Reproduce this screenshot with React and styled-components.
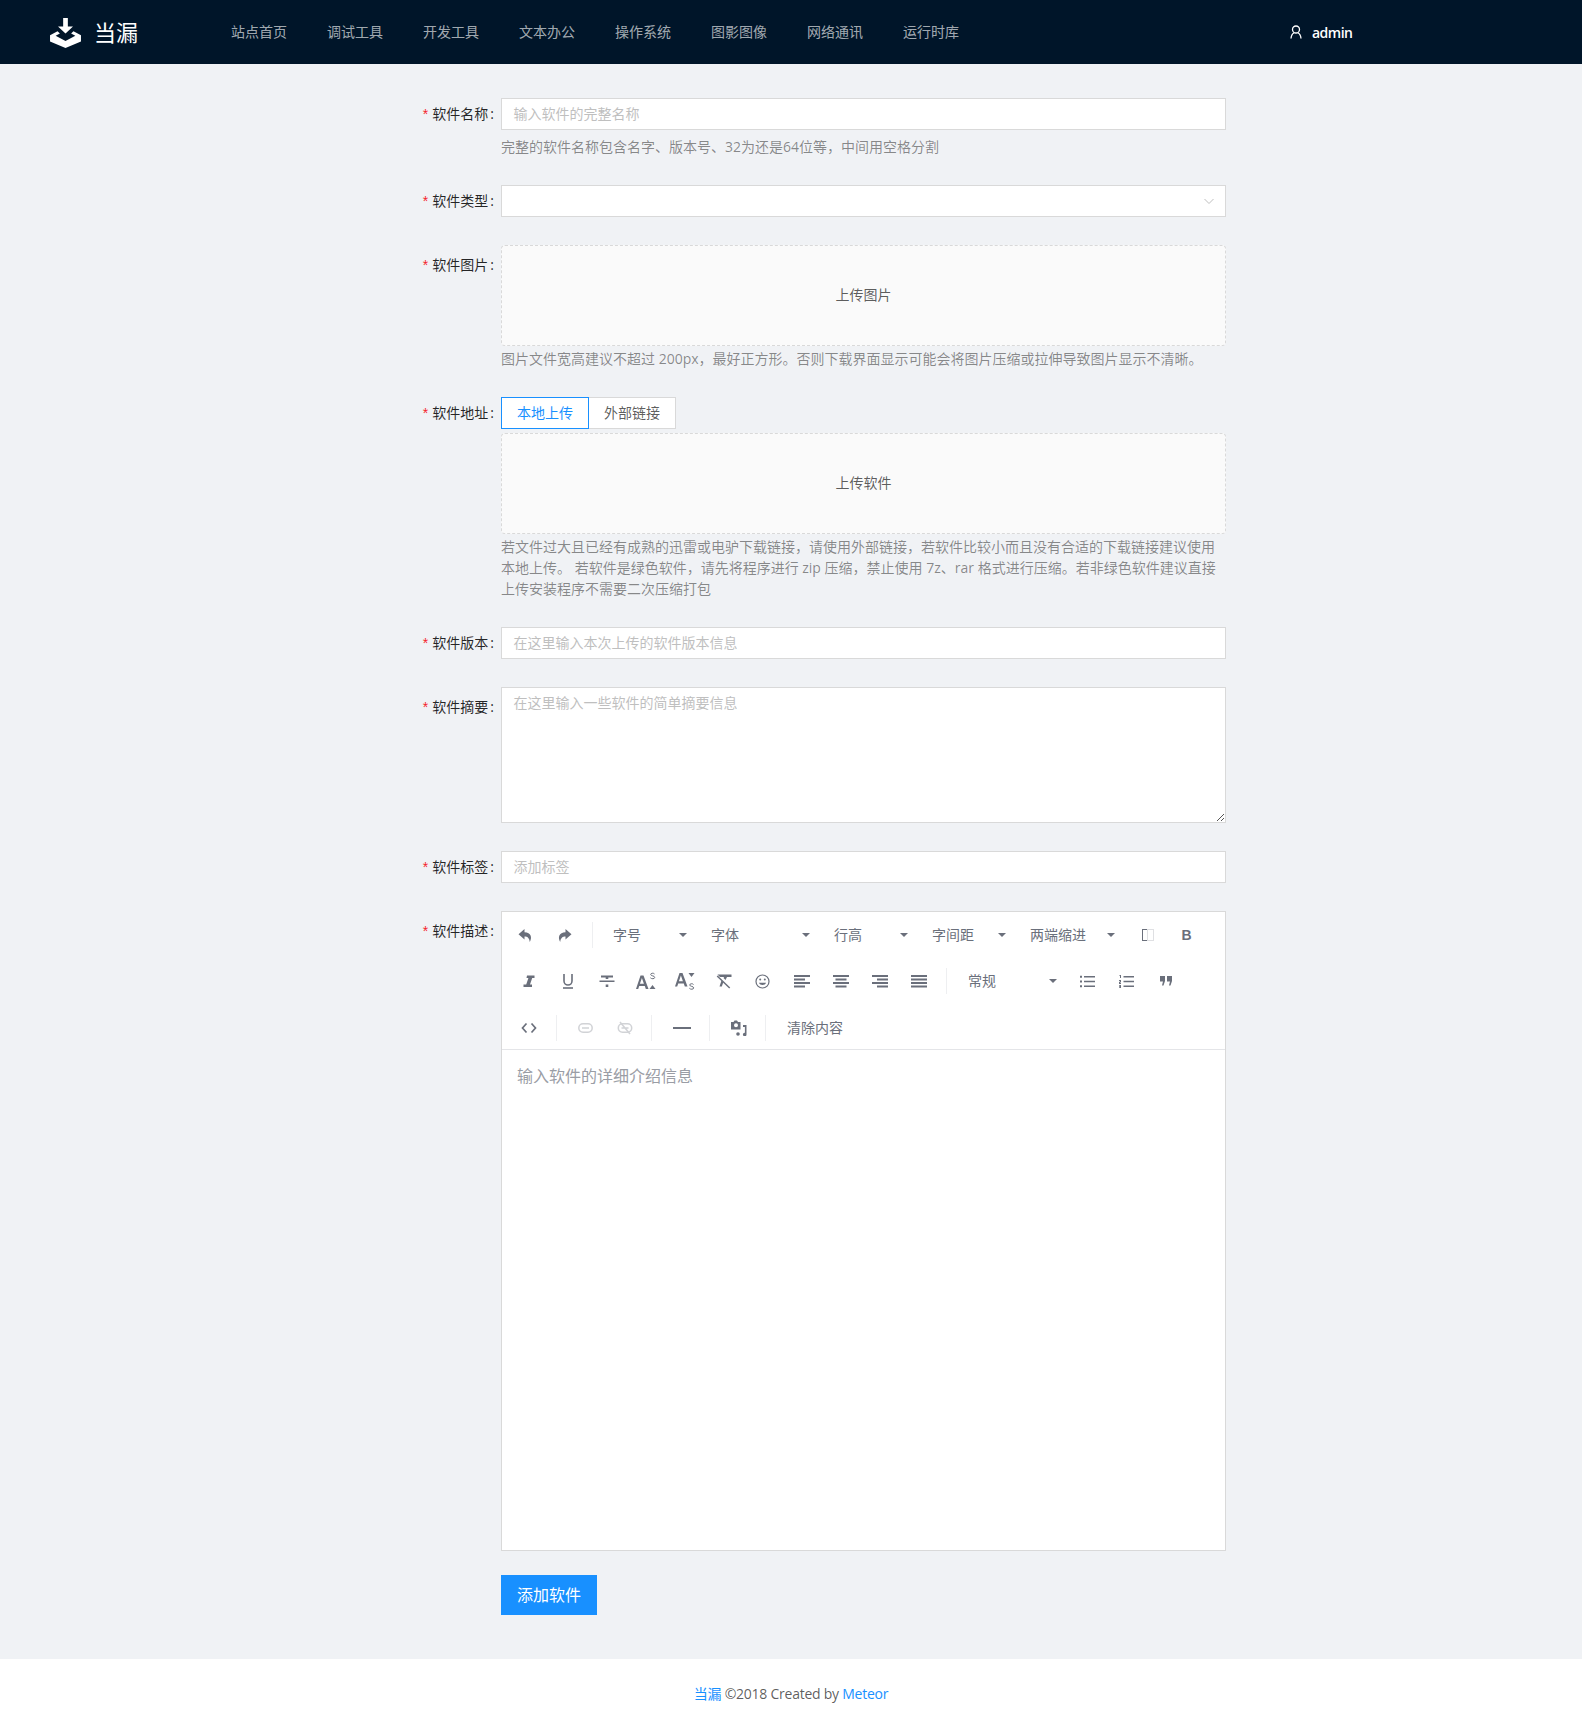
import React from 'react';
import styled, { createGlobalStyle } from 'styled-components';

const Global = createGlobalStyle`
  html, body { margin: 0; padding: 0; background: #f0f2f5; }
  body { font-family: "Open Sans", "Noto Sans CJK SC", sans-serif; font-size: 14px; color: rgba(0,0,0,.65); }
  * { box-sizing: border-box; }
`;

const Page = styled.div`display: flex; flex-direction: column; min-height: 1728px;`;
const Header = styled.header`height: 64px; background: #001529; display: flex; align-items: center;`;
const Logo = styled.div`display: flex; align-items: center; width: 231px; padding-left: 49px;`;
const LogoMark = styled.svg`margin-top: 2px;`;
const LogoTitle = styled.span`margin: 0 0 3px 12px; color: #fff; font-size: 22px; line-height: 32px; font-family: "Noto Sans CJK SC", sans-serif;`;
const Nav = styled.nav`display: flex; gap: 40px; width: 1059px;`;
const NavItem = styled.a`color: rgba(255,255,255,.65); font-size: 14px; line-height: 64px; width: 56px; white-space: nowrap;`;
const User = styled.div`display: flex; align-items: center; gap: 10px; color: #fff; font-size: 14px; font-weight: 600; letter-spacing: -.5px;`;

const Form = styled.main`flex: 1; padding-top: 34px; display: flex; flex-direction: column;`;
const Row = styled.div`display: grid; grid-template-columns: 501px 725px; margin-bottom: ${p => p.$mb ?? 26}px;`;
const Label = styled.label`text-align: right; line-height: ${p => p.$lh || 32}px; color: rgba(0,0,0,.85); white-space: nowrap;
  &::before { content: '*'; color: #f5222d; margin-right: 4px; font-family: SimSun, "Liberation Sans", sans-serif; }
  &::after { content: ':'; margin: 0 7px 0 2px; }
`;
const Control = styled.div`display: flex; flex-direction: column;`;
const Input = styled.div`height: 32px; border: 1px solid #d9d9d9; background: #fff; padding: 0 10px 0 11.5px; line-height: 30px; color: #bfbfbf; display: flex; justify-content: space-between; align-items: center;`;
const TextArea = styled.div`height: 136px; border: 1px solid #d9d9d9; background: #fff; padding: 4px 11.5px; line-height: 22px; color: #bfbfbf; position: relative;`;
const Grip = styled.svg`position: absolute; right: 0; bottom: 0;`;
const Help = styled.div`color: rgba(0,0,0,.45); line-height: 21px; margin-top: ${p => p.$mt ?? 6}px; min-height: 22px;`;
const Drop = styled.div`height: 101px; padding-bottom: 3px; border: 1px dashed #d9d9d9; border-radius: 4px; background: #fafafa; display: flex; align-items: center; justify-content: center; color: rgba(0,0,0,.65);`;
const Tabs = styled.div`display: flex; height: 32px; margin-bottom: 4px;`;
const Tab = styled.div`width: ${p => p.$w}px; line-height: 30px; text-align: center; background: #fff; border: 1px solid ${p => p.$active ? '#1890ff' : '#d9d9d9'}; ${p => !p.$active && 'border-left: 0;'} color: ${p => p.$active ? '#1890ff' : 'rgba(0,0,0,.65)'};`;

const Editor = styled.div`height: 640px; background: #fff; border: 1px solid #d9d9d9; display: flex; flex-direction: column;`;
const Toolbar = styled.div`height: 138px; flex: none; border-bottom: 1px solid #e4e5e8; display: flex; flex-direction: column;`;
const ToolRow = styled.div`display: flex; flex: none; height: ${p => p.$h ?? 46}px; margin-top: ${p => p.$top ?? 0}px; padding-left: ${p => p.$pad}px; align-items: center;`;
const ToolBtn = styled.div`width: 33px; height: 36px; margin: 0 3px; flex: none; display: flex; align-items: center; justify-content: center; color: #6a6f7b; opacity: ${p => p.$off ? .3 : 1};`;
const ToolSep = styled.div`width: 1px; height: 26px; margin: 0 ${p => p.$r ?? 7}px 0 ${p => p.$l ?? 7}px; background: #eeeff1; flex: none;`;
const ToolDrop = styled.div`width: ${p => p.$w}px; height: 36px; margin: 0 ${p => p.$mr ?? 3}px 0 3px; padding: 0 7px 2px 11px; flex: none; display: flex; align-items: center; justify-content: space-between; color: #6a6f7b; font-size: 14px;
  &::after { content: ''; margin-top: 2px; border: 4px solid transparent; border-top: 4px solid #6a6f7b; border-bottom: 0; }
`;
const ToolText = styled.div`height: 36px; margin: 0 3px 0 11px; padding: 0 10px; line-height: 36px; color: #6a6f7b; font-size: 14px;`;
const EditorBody = styled.div`flex: 1; padding: 14px 15px; font-size: 16px; line-height: 24px; color: #9a9da5;`;
const Submit = styled.button`width: 96px; height: 40px; background: #1890ff; color: #fff; border: 0; font: inherit; font-size: 16px; padding: 0 0 2px;`;

const Footer = styled.footer`height: 69px; background: #fff; text-align: center; line-height: 70px; color: rgba(0,0,0,.65); letter-spacing: -.25px;`;
const FLink = styled.a`color: #1890ff;`;

const LogoIcon = () => (
  <LogoMark width="33" height="30" viewBox="0 0 33 32" fill="#fff">
    <path d="M14 0h5v9h5.500L16.500 16.500 8.500 9H14z"/>
    <path d="M0 18.500 8 14l2.500 2.500-4.500 2.500 10.500 5.500L27 19l-4.500-2.500L25 14l8 4.500V25l-16.500 7L0 25z"/>
  </LogoMark>
);
const UserIcon = () => (
  <svg width="12" height="14" viewBox="0 0 12 14" fill="none" stroke="#fff" strokeWidth="1.3">
    <circle cx="6" cy="4.500" r="3.500"/><path d="M1 13.500c.3-3 1.700-5 3-5.500M11 13.500c-.3-3-1.700-5-3-5.500"/>
  </svg>
);
const Undo = () => <svg width="15" height="15" viewBox="0 0 15 15" fill="currentColor"><path d="M6.500 1 .5 6.300 6.500 11.500V8.400c3 0 4.700 1.200 5.300 5.600 2.600-4.800 1.300-9.300-5.300-9.700z"/></svg>;
const Redo = () => <svg width="15" height="15" viewBox="0 0 15 15" fill="currentColor"><path d="M8.500 1l6 5.300-6 5.200V8.400c-3 0-4.700 1.200-5.300 5.600C.6 9.200 1.900 4.700 8.500 4.300z"/></svg>;
const AlignLeft = () => <svg width="16" height="14" viewBox="0 0 16 14" fill="currentColor"><path d="M0 1h16v2H0zM0 4.500h11v2H0zM0 8h16v2H0zM0 11.500h11v2H0z"/></svg>;
const AlignCenter = () => <svg width="16" height="14" viewBox="0 0 16 14" fill="currentColor"><path d="M0 1h16v2H0zM2.500 4.500h11v2h-11zM0 8h16v2H0zM2.500 11.500h11v2h-11z"/></svg>;
const AlignRight = () => <svg width="16" height="14" viewBox="0 0 16 14" fill="currentColor"><path d="M0 1h16v2H0zM5 4.500h11v2H5zM0 8h16v2H0zM5 11.500h11v2H5z"/></svg>;
const AlignJust = () => <svg width="16" height="14" viewBox="0 0 16 14" fill="currentColor"><path d="M0 1h16v2H0zM0 4.500h16v2H0zM0 8h16v2H0zM0 11.500h16v2H0z"/></svg>;
const Italic = () => <svg width="14" height="14" viewBox="0 0 14 14" fill="currentColor"><path d="M5 1.500h7.500V4h-2.300L8 10.500h2V13H1.500v-2.500h2.700L6.400 4H4.500z"/></svg>;
const Under = () => <svg width="14" height="16" viewBox="0 0 14 16" fill="none" stroke="currentColor" strokeWidth="1.6"><path d="M3 1v7a4 4 0 0 0 8 0V1"/><path d="M2 15h10"/></svg>;
const Strike = () => <svg width="16" height="16" viewBox="0 0 16 16" fill="currentColor"><path d="M2 2.500h12v2H2zM.5 7.500h15V9H.5zM6.700 11.500h2.600v2.500H6.700zM6.700 4.500h2.600V6H6.700z"/></svg>;
const Sup = () => <svg width="20" height="18" viewBox="0 0 20 18" fill="currentColor">
  <path d="M4.500 3.500h3L12.500 17H9.800l-1-3H3.200l-1 3H0zm-.6 8.300h4L5.900 6z"/>
  <path d="M13.500 17h6l-3-4z"/>
  <path d="M18.500 2c-.8-1.200-3.800-1-3.800.5 0 1.700 4 1 4 2.900 0 1.700-3.300 1.700-4.300.4" fill="none" stroke="currentColor" strokeWidth="1"/>
</svg>;
const Sub = () => <svg width="20" height="20" viewBox="0 0 20 20" fill="currentColor">
  <path d="M4.500 2h3l5 13.500H9.800l-1-3H3.200l-1 3H0zm-.6 8.300h4L5.900 4.500z"/>
  <path d="M13.500 2h6l-3 4z"/>
  <path d="M18.500 13.500c-.8-1.200-3.800-1-3.800.5 0 1.700 4 1 4 2.900 0 1.700-3.300 1.700-4.300.4" fill="none" stroke="currentColor" strokeWidth="1"/>
</svg>;
const Clear = () => <svg width="16" height="16" viewBox="0 0 16 16" fill="currentColor">
  <path d="M1.500 1.500h14V4H11l-1.500 3-2-2L8.200 4H4z"/><path d="M5.500 7.500l1.800 1.800L5.800 13.500H3.500z"/><path d="M1.200 3l12.500 12" stroke="currentColor" strokeWidth="1.500"/>
</svg>;
const Emoji = () => <svg width="15" height="15" viewBox="0 0 15 15" fill="none" stroke="currentColor" strokeWidth="1.200"><circle cx="7.500" cy="7.500" r="6.500"/><path d="M4 8.800c.8 3 6.200 3 7 0z" fill="currentColor" stroke="none"/><circle cx="5.200" cy="5.500" r="1" fill="currentColor" stroke="none"/><circle cx="9.800" cy="5.500" r="1" fill="currentColor" stroke="none"/></svg>;
const UL = () => <svg width="15" height="13" viewBox="0 0 15 13" fill="currentColor"><path d="M4 1h11v1.500H4zM4 5.700h11v1.500H4zM4 10.500h11V12H4zM0 .7h2v2H0zM0 5.500h2v2H0zM0 10.200h2v2H0z"/></svg>;
const OL = () => <svg width="15" height="13" viewBox="0 0 15 13" fill="currentColor"><path d="M4.500 1h10.500v1.500H4.500zM4.500 5.700h10.500v1.500H4.500zM4.500 10.500h10.500V12H4.500zM.5 0h1.500v3H1V1H.5zM0 5h2v2.500H1V8h1v1H0V6.700h1V6H0zM0 10h2v3H0v-.8h1v-.3H.3v-.8H1v-.3H0z"/></svg>;
const Quote = () => <svg width="12" height="10" viewBox="0 0 12 10" fill="currentColor"><path d="M0 0h5v5L3.500 9.500H2L3 5.500H0zM7 0h5v5l-1.500 4.500H9L10 5.500H7z"/></svg>;
const Code = () => <svg width="16" height="12" viewBox="0 0 16 12" fill="none" stroke="currentColor" strokeWidth="1.700"><path d="M5.500 1.500 1.500 6l4 4.500M10.500 1.500l4 4.500-4 4.500"/></svg>;
const LinkI = () => <svg width="15" height="10" viewBox="0 0 15 10" fill="none" stroke="currentColor" strokeWidth="1.500"><rect x=".8" y=".8" width="13.400" height="8.400" rx="4.200"/><path d="M4 5h7" /></svg>;
const Unlink = () => <svg width="16" height="14" viewBox="0 0 16 14" fill="none" stroke="currentColor" strokeWidth="1.500"><rect x="1.300" y="2.800" width="13.400" height="8.400" rx="4.200"/><path d="M4.500 7h7M3 1l10 12"/></svg>;
const Hr = () => <svg width="18" height="3" viewBox="0 0 18 3" fill="currentColor"><rect width="18" height="2"/></svg>;
const Media = () => <svg width="16" height="16" viewBox="0 0 16 16" fill="currentColor">
  <path d="M0 2h2.500l1-1.500h2.500l1 1.500h2.500v7.500H0zM5 3.300a2 2 0 1 0 0 4 2 2 0 0 0 0-4z" fillRule="evenodd"/>
  <path d="M12 5h3.500v9.500a1.800 1.800 0 1 1-1.600-1.800V7H12z"/><circle cx="7" cy="14" r="1.800"/>
</svg>;
const Columns = () => <svg width="12" height="12" viewBox="0 0 12 12" fill="none"><rect x=".5" y=".5" width="5" height="11" stroke="#6a6f7b" strokeWidth="1"/><rect x="5.500" y=".5" width="6" height="11" stroke="#dfe0e3" strokeWidth="1"/></svg>;
const Bold = styled.span`font-weight: 800; font-size: 14px; font-family: "Liberation Sans", sans-serif;`;

const nav = ['站点首页','调试工具','开发工具','文本办公','操作系统','图影图像','网络通讯','运行时库'];

export default function App() {
  return (
    <Page>
      <Global />
      <Header>
        <Logo><LogoIcon /><LogoTitle>当漏</LogoTitle></Logo>
        <Nav>{nav.map(n => <NavItem key={n}>{n}</NavItem>)}</Nav>
        <User><UserIcon />admin</User>
      </Header>
      <Form>
        <Row $mb={27}>
          <Label>软件名称</Label>
          <Control>
            <Input>输入软件的完整名称</Input>
            <Help>完整的软件名称包含名字、版本号、32为还是64位等，中间用空格分割</Help>
          </Control>
        </Row>
        <Row $mb={28}>
          <Label>软件类型</Label>
          <Control><Input><span /><svg width="12" height="12" viewBox="0 0 12 12" fill="none" stroke="#bfbfbf" strokeWidth="1"><path d="M1.500 4l4.500 4.500L10.500 4"/></svg></Input></Control>
        </Row>
        <Row $mb={27}>
          <Label $lh={40}>软件图片</Label>
          <Control>
            <Drop>上传图片</Drop>
            <Help $mt={2}>图片文件宽高建议不超过 200px，最好正方形。否则下载界面显示可能会将图片压缩或拉伸导致图片显示不清晰。</Help>
          </Control>
        </Row>
        <Row $mb={28}>
          <Label>软件地址</Label>
          <Control>
            <Tabs><Tab $w={88} $active>本地上传</Tab><Tab $w={87}>外部链接</Tab></Tabs>
            <Drop>上传软件</Drop>
            <Help $mt={2}>若文件过大且已经有成熟的迅雷或电驴下载链接，请使用外部链接，若软件比较小而且没有合适的下载链接建议使用本地上传。 若软件是绿色软件，请先将程序进行 zip 压缩，禁止使用 7z、rar 格式进行压缩。若非绿色软件建议直接上传安装程序不需要二次压缩打包</Help>
          </Control>
        </Row>
        <Row $mb={28}>
          <Label>软件版本</Label>
          <Control><Input>在这里输入本次上传的软件版本信息</Input></Control>
        </Row>
        <Row $mb={28}>
          <Label $lh={40}>软件摘要</Label>
          <Control>
            <TextArea>在这里输入一些软件的简单摘要信息
              <Grip width="9" height="9" viewBox="0 0 9 9" stroke="#555" strokeWidth="1"><path d="M1 8l7-7M5 8l3-3"/></Grip>
            </TextArea>
          </Control>
        </Row>
        <Row $mb={28}>
          <Label>软件标签</Label>
          <Control><Input>添加标签</Input></Control>
        </Row>
        <Row $mb={24}>
          <Label $lh={40}>软件描述</Label>
          <Control>
            <Editor>
              <Toolbar>
                <ToolRow $pad={4}>
                  <ToolBtn><Undo /></ToolBtn><ToolBtn><Redo /></ToolBtn>
                  <ToolSep $l={8} $r={6} />
                  <ToolDrop $w={92}>字号</ToolDrop><ToolDrop $w={117}>字体</ToolDrop><ToolDrop $w={92}>行高</ToolDrop><ToolDrop $w={92}>字间距</ToolDrop><ToolDrop $w={103} $mr={6}>两端缩进</ToolDrop>
                  <ToolBtn><Columns /></ToolBtn><ToolBtn><Bold>B</Bold></ToolBtn>
                </ToolRow>
                <ToolRow $pad={7}>
                  <ToolBtn><Italic /></ToolBtn><ToolBtn><Under /></ToolBtn><ToolBtn><Strike /></ToolBtn><ToolBtn><Sup /></ToolBtn><ToolBtn><Sub /></ToolBtn><ToolBtn><Clear /></ToolBtn><ToolBtn><Emoji /></ToolBtn>
                  <ToolBtn><AlignLeft /></ToolBtn><ToolBtn><AlignCenter /></ToolBtn><ToolBtn><AlignRight /></ToolBtn><ToolBtn><AlignJust /></ToolBtn>
                  <ToolSep $l={8} $r={7} />
                  <ToolDrop $w={107} $mr={4}>常规</ToolDrop>
                  <ToolBtn><UL /></ToolBtn><ToolBtn><OL /></ToolBtn><ToolBtn><Quote /></ToolBtn>
                </ToolRow>
                <ToolRow $pad={7} $h={42} $top={3}>
                  <ToolBtn><Code /></ToolBtn>
                  <ToolSep $l={8} $r={9} />
                  <ToolBtn $off><LinkI /></ToolBtn><ToolBtn $off><Unlink /></ToolBtn>
                  <ToolSep $l={7} $r={10} />
                  <ToolBtn><Hr /></ToolBtn>
                  <ToolSep $l={8} $r={9} />
                  <ToolBtn><Media /></ToolBtn>
                  <ToolSep $l={7} $r={0} />
                  <ToolText>清除内容</ToolText>
                </ToolRow>
              </Toolbar>
              <EditorBody>输入软件的详细介绍信息</EditorBody>
            </Editor>
          </Control>
        </Row>
        <Row $mb={16}>
          <span />
          <Control><div><Submit>添加软件</Submit></div></Control>
        </Row>
      </Form>
      <Footer><FLink>当漏</FLink> ©2018 Created by <FLink>Meteor</FLink></Footer>
    </Page>
  );
}
